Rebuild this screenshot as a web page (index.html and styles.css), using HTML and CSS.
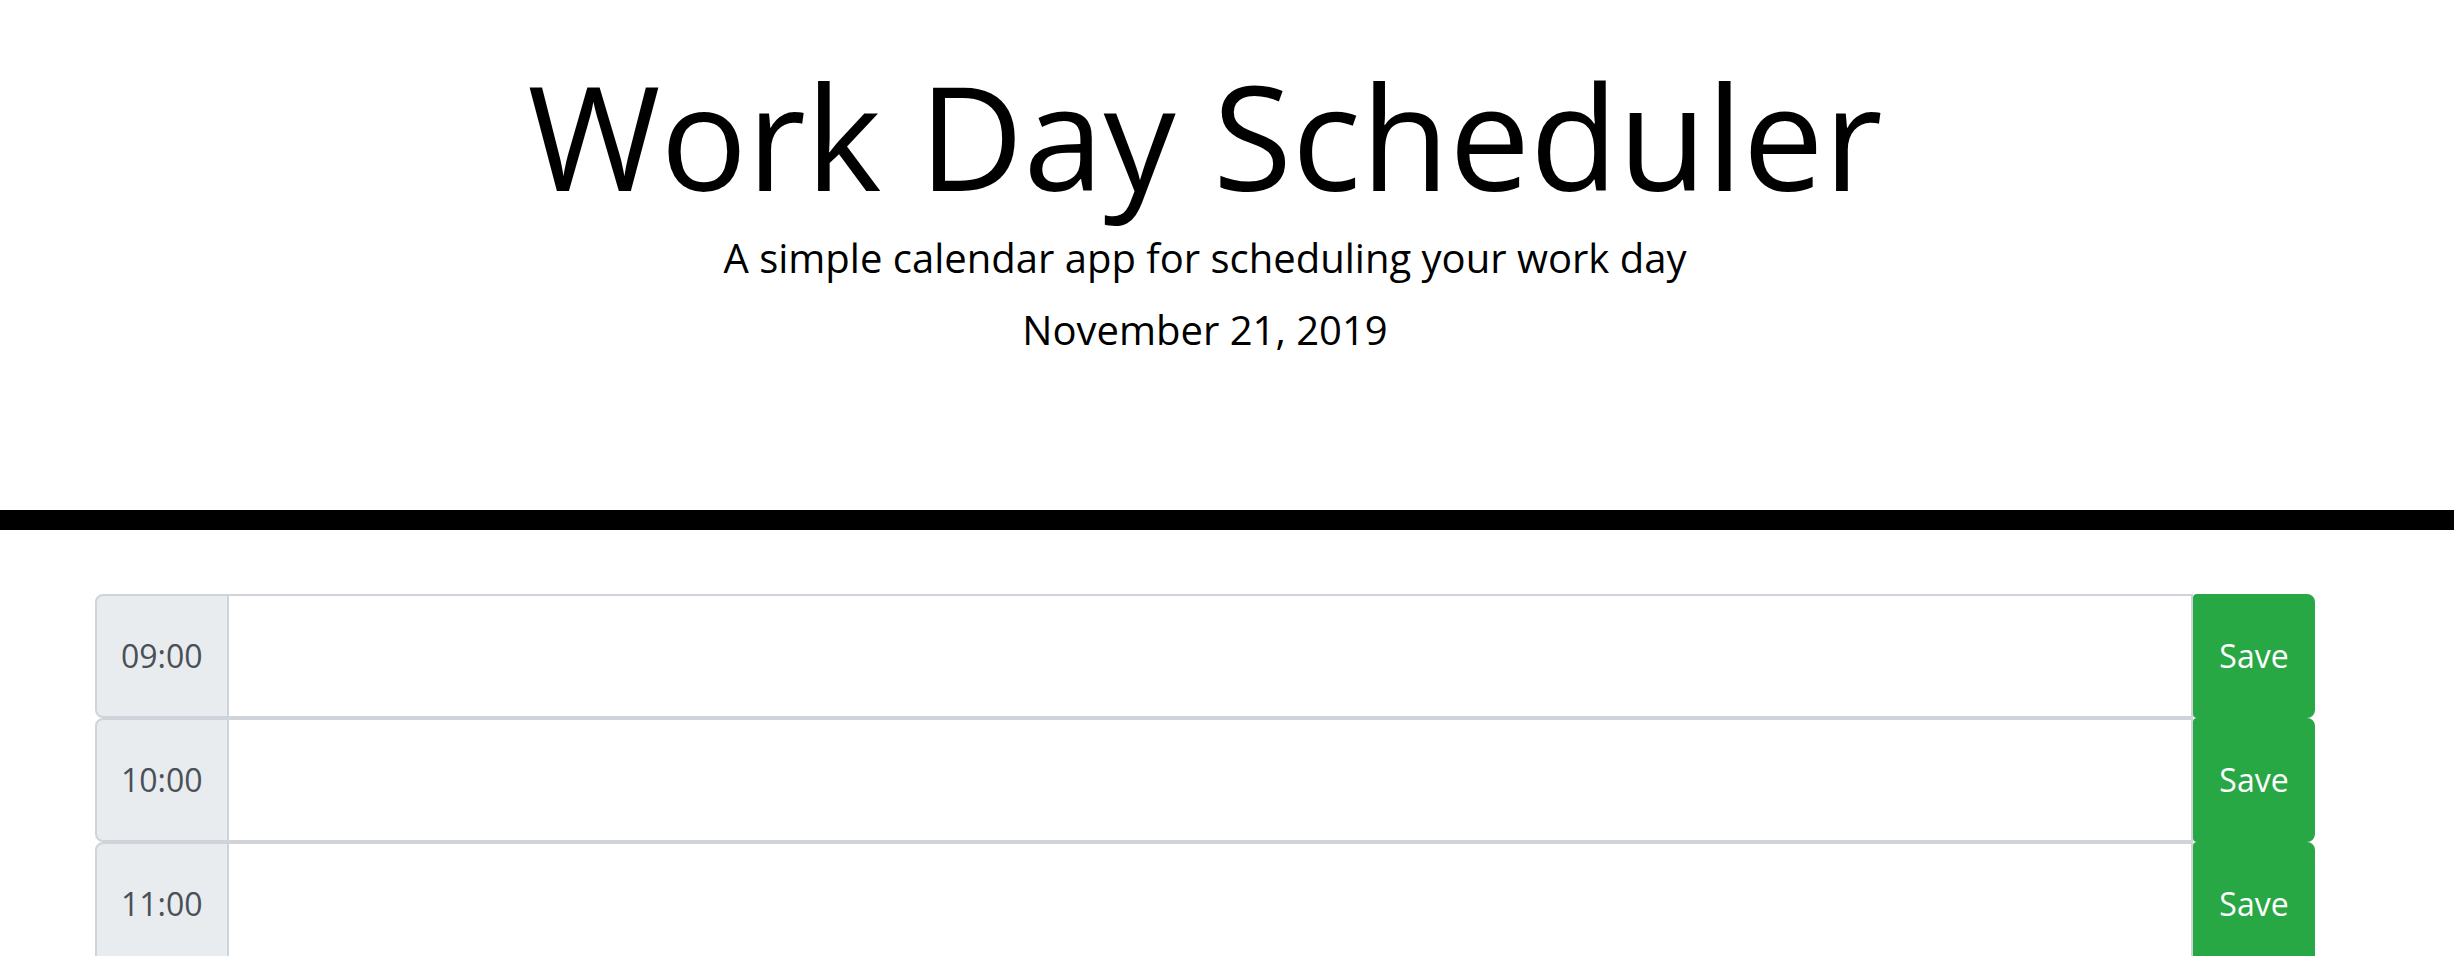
FILE: index.html
```html
<!DOCTYPE html>
<html lang="en">
<head>
<meta charset="utf-8">
<title>Work Day Scheduler</title>
<link rel="stylesheet" href="styles.css">
</head>
<body>
<header class="jumbotron">
  <h1 class="title">Work Day Scheduler</h1>
  <p class="lead">A simple calendar app for scheduling your work day</p>
  <p class="lead">November 21, 2019</p>
</header>
<main class="main">
  <div class="container">
    <div class="row"><div class="hour">09:00</div><textarea class="description"></textarea><button class="save-btn">Save</button></div>
    <div class="row"><div class="hour">10:00</div><textarea class="description"></textarea><button class="save-btn">Save</button></div>
    <div class="row"><div class="hour">11:00</div><textarea class="description"></textarea><button class="save-btn">Save</button></div>
  </div>
</main>
</body>
</html>
```

FILE: styles.css
```css
* {
  box-sizing: border-box;
}

html, body {
  margin: 0;
  padding: 0;
  background: #ffffff;
}

body {
  font-family: "Open Sans", "Noto Sans", sans-serif;
  font-size: 32px;
  line-height: 1;
  color: #000000;
}

.jumbotron {
  text-align: center;
  padding: 49px 44px 128px 0;
  border-bottom: 20px solid #000000;
  margin-bottom: 64px;
}

.title {
  margin: 0 0 16px 0;
  font-size: 144px;
  font-weight: 400;
  line-height: 1.2;
}

.lead {
  margin: 0 0 32px 0;
  font-size: 40px;
  font-weight: 400;
  line-height: 1;
}

.main {
  padding-right: 44px;
}

.container {
  max-width: 2280px;
  margin: 0 auto;
  padding: 0 30px;
}

.row {
  display: flex;
  height: 124px;
}

.hour {
  display: flex;
  align-items: center;
  justify-content: center;
  padding: 0 24px;
  background: #e9ecef;
  color: #495057;
  border: 2px solid #ced4da;
  border-radius: 8px 0 0 8px;
  font-size: 32px;
}

.description {
  flex: 1;
  height: 100%;
  margin: 0;
  border: 2px solid #ced4da;
  border-left: none;
  background: #ffffff;
  resize: none;
  font-family: inherit;
  font-size: 32px;
  padding: 12px 24px;
  outline: none;
}

.save-btn {
  width: 122px;
  height: 100%;
  margin: 0;
  border: 2px solid #28a745;
  background: #28a745;
  color: #ffffff;
  font-family: inherit;
  font-size: 32px;
  line-height: 1.5;
  padding: 0 24px;
  border-radius: 4px 8px 8px 4px;
  cursor: pointer;
}
```
